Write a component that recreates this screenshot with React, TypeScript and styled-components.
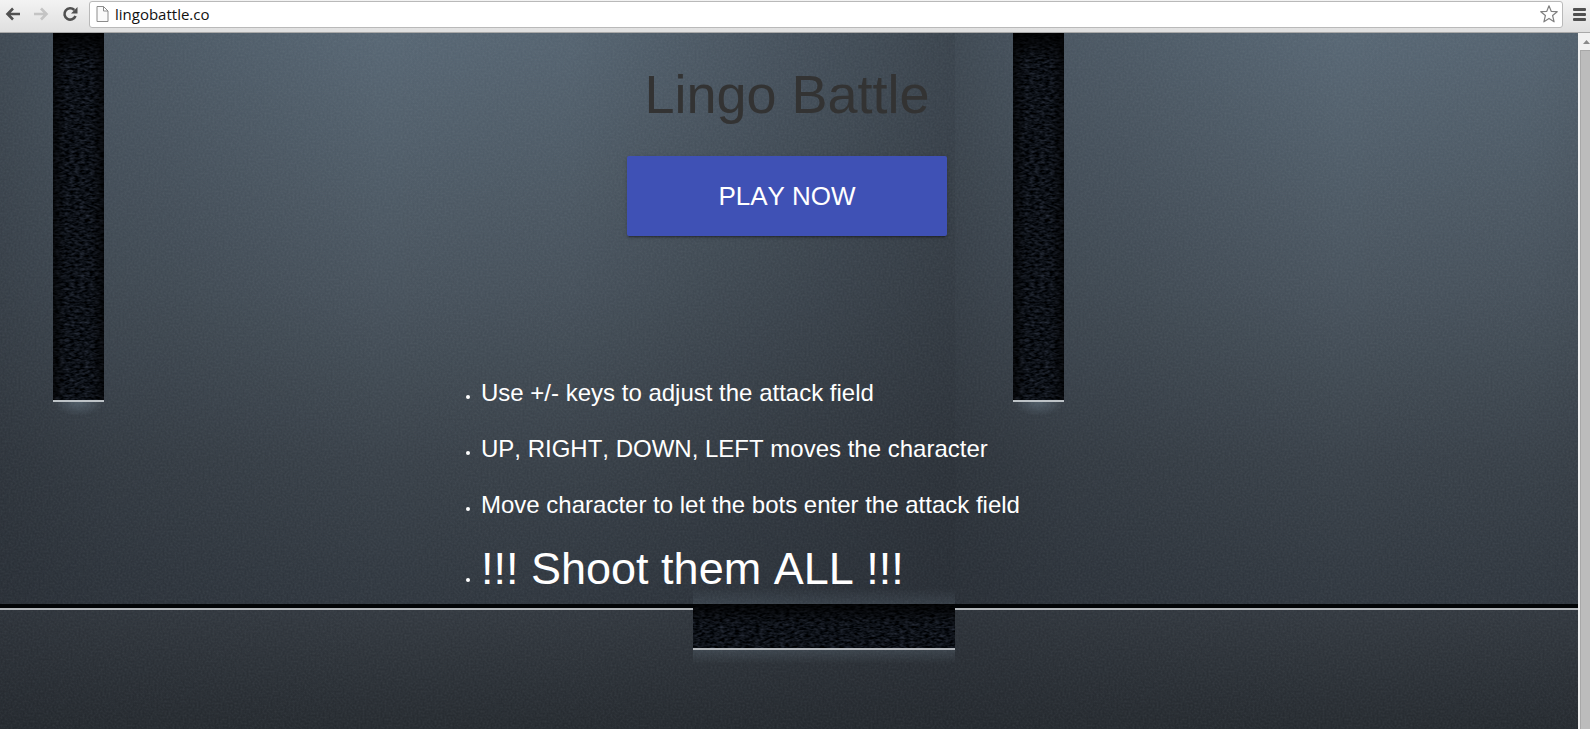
import React from 'react';
import styled, { createGlobalStyle } from 'styled-components';

const GlobalStyle = createGlobalStyle`
  *, *::before, *::after { box-sizing: border-box; }
  html, body { margin: 0; padding: 0; }
  body {
    background: #2b3036;
    font-family: "Liberation Sans", Arial, sans-serif;
    font-kerning: none;
  }
`;

const Browser = styled.div`
  display: flex;
  flex-direction: column;
  min-height: 100vh;
`;

const Toolbar = styled.header`
  display: flex;
  align-items: center;
  height: 33px;
  padding: 0 2px 4px 4px;
  background: linear-gradient(#f3f3f3, #dfdfdf);
  border-bottom: 1px solid #a9a9a9;
`;

const ToolButton = styled.button<{ $width: number }>`
  display: flex;
  align-items: center;
  justify-content: center;
  flex: none;
  width: ${({ $width }) => $width}px;
  height: 24px;
  padding: 0;
  border: 0;
  background: none;
`;

const AddressBar = styled.form`
  display: flex;
  align-items: center;
  flex: 1;
  height: 27px;
  margin: 0 7px 0 9px;
  padding: 0 4px 0 6px;
  background: #fff;
  border: 1px solid #b9b9b9;
  border-radius: 3px;
`;

const AddressInput = styled.input`
  flex: 1;
  min-width: 0;
  padding: 0 0 0 6px;
  border: 0;
  outline: 0;
  background: none;
  color: #111;
  font: 15px/20px "Open Sans", "Noto Sans", sans-serif;
`;

const Viewport = styled.div`
  display: flex;
  flex: 1;
`;

const Page = styled.main`
  position: relative;
  flex: 1;
  min-width: 0;
  padding: 24px 4px 80px 0;
  overflow: hidden;
`;

const Artwork = styled.svg`
  position: absolute;
  inset: 0;
  width: 100%;
  height: 100%;
`;

const Content = styled.div`
  position: relative;
  display: flex;
  flex-direction: column;
  align-items: center;
`;

const Title = styled.h1`
  margin: 0 0 24px;
  color: #333;
  font-size: 54px;
  font-weight: 400;
  line-height: 75px;
`;

const PlayButton = styled.button`
  width: 320px;
  height: 80px;
  border: 0;
  border-radius: 2px;
  background: #3f51b5;
  color: #fff;
  font: 26px/36px "Liberation Sans", Arial, sans-serif;
  font-kerning: none;
  text-transform: uppercase;
  box-shadow: 0 2px 2px rgba(0, 0, 0, 0.14), 0 3px 1px -2px rgba(0, 0, 0, 0.2),
    0 1px 5px rgba(0, 0, 0, 0.12);
`;

const Rules = styled.ul`
  width: 100%;
  max-width: 612px;
  margin: 141px 0 0;
  padding: 0;
  color: #fff;
  font-size: 14px;
`;

const Rule = styled.li`
  margin: 0 0 24px;
`;

const RuleText = styled.h2<{ $large?: boolean }>`
  margin: 0;
  font-size: ${({ $large }) => ($large ? 45 : 24)}px;
  font-weight: 400;
  line-height: ${({ $large }) => ($large ? 48 : 32)}px;
`;

const Scrollbar = styled.div`
  flex: none;
  width: 12px;
  padding-left: 2px;
  background: #f1f1f1;
  display: flex;
  flex-direction: column;
`;

const ScrollUp = styled.button`
  display: flex;
  align-items: center;
  justify-content: flex-end;
  height: 17px;
  padding: 0;
  border: 0;
  background: none;
`;

const ScrollThumb = styled.div`
  flex: 1;
  background: #bcbcbc;
  border-left: 1px solid #a8a8a8;
  border-top: 1px solid #a8a8a8;
`;

const rules = [
  { text: 'Use +/- keys to adjust the attack field' },
  { text: 'UP, RIGHT, DOWN, LEFT moves the character' },
  { text: 'Move character to let the bots enter the attack field' },
  { text: '!!! Shoot them ALL !!!', large: true },
];

function Backdrop() {
  return (
    <Artwork aria-hidden="true">
      <defs>
        <linearGradient id="steel" x1="0" y1="0" x2="0" y2="1">
          <stop offset="0" stopColor="#586774" />
          <stop offset="0.45" stopColor="#48535d" />
          <stop offset="0.75" stopColor="#394149" />
          <stop offset="1" stopColor="#30373f" />
        </linearGradient>
        <linearGradient id="ledge" x1="0" y1="0" x2="0" y2="1">
          <stop offset="0" stopColor="#343a41" />
          <stop offset="1" stopColor="#262b30" />
        </linearGradient>
        <linearGradient id="sides" x1="0" y1="0" x2="1" y2="0">
          <stop offset="0" stopColor="#20242a" stopOpacity="0.45" />
          <stop offset="0.12" stopColor="#20242a" stopOpacity="0.24" />
          <stop offset="0.4" stopColor="#20242a" stopOpacity="0" />
          <stop offset="0.6" stopColor="#20242a" stopOpacity="0.04" />
          <stop offset="0.85" stopColor="#20242a" stopOpacity="0.34" />
          <stop offset="1" stopColor="#20242a" stopOpacity="0.52" />
        </linearGradient>
        <linearGradient id="slotShade" x1="0" y1="0" x2="0" y2="1">
          <stop offset="0" stopColor="#000" stopOpacity="0.8" />
          <stop offset="1" stopColor="#000" stopOpacity="0" />
        </linearGradient>
        <linearGradient id="slotSides" x1="0" y1="0" x2="1" y2="0">
          <stop offset="0" stopColor="#000" stopOpacity="0.6" />
          <stop offset="0.25" stopColor="#000" stopOpacity="0" />
          <stop offset="0.75" stopColor="#000" stopOpacity="0" />
          <stop offset="1" stopColor="#000" stopOpacity="0.6" />
        </linearGradient>
        <radialGradient id="glow" cx="0.5" cy="0" r="1" gradientTransform="translate(0.25 0) scale(0.5 1)">
          <stop offset="0" stopColor="#8298a8" stopOpacity="0.35" />
          <stop offset="1" stopColor="#8298a8" stopOpacity="0" />
        </radialGradient>
        <linearGradient id="ledgeGlow" x1="0" y1="0" x2="0" y2="1">
          <stop offset="0" stopColor="#7f93a3" stopOpacity="0.2" />
          <stop offset="1" stopColor="#7f93a3" stopOpacity="0" />
        </linearGradient>
        <linearGradient id="glowUp" x1="0" y1="1" x2="0" y2="0">
          <stop offset="0" stopColor="#7f93a3" stopOpacity="0.16" />
          <stop offset="1" stopColor="#7f93a3" stopOpacity="0" />
        </linearGradient>
        <filter id="grain" x="0" y="0" width="100%" height="100%">
          <feTurbulence type="fractalNoise" baseFrequency="0.5" numOctaves="2" seed="3" />
          <feColorMatrix values="0 0 0 0 0.7  0 0 0 0 0.8  0 0 0 0 0.85  0.5 0 0 0 -0.17" />
        </filter>
        <filter id="leather" x="0" y="0" width="100%" height="100%" colorInterpolationFilters="sRGB">
          <feTurbulence type="fractalNoise" baseFrequency="0.2 0.45" numOctaves="2" seed="8" />
          <feColorMatrix values="0.28 0 0 0 -0.09  0.3 0 0 0 -0.085  0.36 0 0 0 -0.09  0 0 0 0 1" />
        </filter>
        <pattern id="tile" x="-5" y="0" width="960" height="960" patternUnits="userSpaceOnUse">
          <rect width="960" height="571" fill="url(#steel)" />
          <rect y="571" width="960" height="389" fill="#262b30" />
          <rect y="571" width="960" height="125" fill="url(#ledge)" />
          <rect width="960" height="571" fill="url(#sides)" />
          <rect y="571" width="960" height="389" fill="url(#sides)" opacity="0.7" />
          <rect width="960" height="960" filter="url(#grain)" opacity="0.22" />
          <rect x="58" width="51" height="367" filter="url(#leather)" />
          <rect x="58" width="51" height="367" fill="url(#slotSides)" />
          <rect x="58" width="51" height="30" fill="url(#slotShade)" />
          <rect x="58" y="367" width="51" height="2" fill="#bcc2c6" />
          <rect x="58" y="369" width="51" height="14" fill="url(#glow)" />
          <rect x="698" y="555" width="262" height="16" fill="url(#glowUp)" />
          <rect y="571" width="960" height="4" fill="#020406" />
          <rect y="575" width="960" height="2" fill="#b4b8bc" />
          <rect x="698" y="571" width="262" height="44" filter="url(#leather)" />
          <rect x="698" y="571" width="262" height="20" fill="url(#slotShade)" />
          <rect x="698" y="615" width="262" height="2" fill="#b4b8bc" />
          <rect x="698" y="617" width="262" height="14" fill="url(#ledgeGlow)" />
        </pattern>
      </defs>
      <rect width="100%" height="100%" fill="url(#tile)" />
    </Artwork>
  );
}

export default function App() {
  return (
    <>
      <GlobalStyle />
      <Browser>
        <Toolbar>
          <ToolButton $width={18} aria-label="Back">
            <svg width="16" height="14" viewBox="0 0 16 14" fill="none" stroke="#505050" strokeWidth="2.6">
              <path d="M15 7H3M8 1.5 2.5 7 8 12.5" />
            </svg>
          </ToolButton>
          <ToolButton $width={38} aria-label="Forward" disabled>
            <svg width="16" height="14" viewBox="0 0 16 14" fill="none" stroke="#c4c4c4" strokeWidth="2.6">
              <path d="M1 7h12M8 1.5 13.5 7 8 12.5" />
            </svg>
          </ToolButton>
          <ToolButton $width={20} aria-label="Reload">
            <svg width="16" height="16" viewBox="0 0 16 16">
              <path d="M12.3 4A5.7 5.7 0 1 0 13.5 10" fill="none" stroke="#505050" strokeWidth="2.6" />
              <path d="M15.5 1v6.5H9z" fill="#505050" />
            </svg>
          </ToolButton>
          <AddressBar onSubmit={(e) => e.preventDefault()}>
            <svg width="13" height="16" viewBox="0 0 13 16" fill="#fafafa" stroke="#8c8c8c">
              <path d="M1 .5h6.5L12 5v10.5H1zM7.5 .5V5H12" />
            </svg>
            <AddressInput aria-label="Address" defaultValue="lingobattle.co" />
            <ToolButton $width={18} type="button" aria-label="Bookmark this page">
              <svg width="18" height="18" viewBox="0 0 18 18" fill="#fff" stroke="#808080" strokeWidth="1.2" strokeLinejoin="round">
                <path d="M9 .8 11.2 6.3 17.2 6.7 12.6 10.5 14.1 16.8 9 13.4 3.9 16.8 5.4 10.5 .8 6.7 6.8 6.3z" />
              </svg>
            </ToolButton>
          </AddressBar>
          <ToolButton $width={18} aria-label="Menu">
            <svg width="13" height="13" viewBox="0 0 13 13" fill="#505050">
              <rect width="13" height="3" rx="1" />
              <rect y="5" width="13" height="3" rx="1" />
              <rect y="10" width="13" height="3" rx="1" />
            </svg>
          </ToolButton>
        </Toolbar>
        <Viewport>
          <Page>
            <Backdrop />
            <Content>
              <Title>Lingo Battle</Title>
              <PlayButton>Play now</PlayButton>
              <Rules>
                {rules.map(({ text, large }) => (
                  <Rule key={text}>
                    <RuleText $large={large}>{text}</RuleText>
                  </Rule>
                ))}
              </Rules>
            </Content>
          </Page>
          <Scrollbar>
            <ScrollUp aria-label="Scroll up">
              <svg width="7" height="4" viewBox="0 0 7 4" fill="#8a8a8a">
                <path d="M0 4 3.5 0 7 4z" />
              </svg>
            </ScrollUp>
            <ScrollThumb />
          </Scrollbar>
        </Viewport>
      </Browser>
    </>
  );
}
